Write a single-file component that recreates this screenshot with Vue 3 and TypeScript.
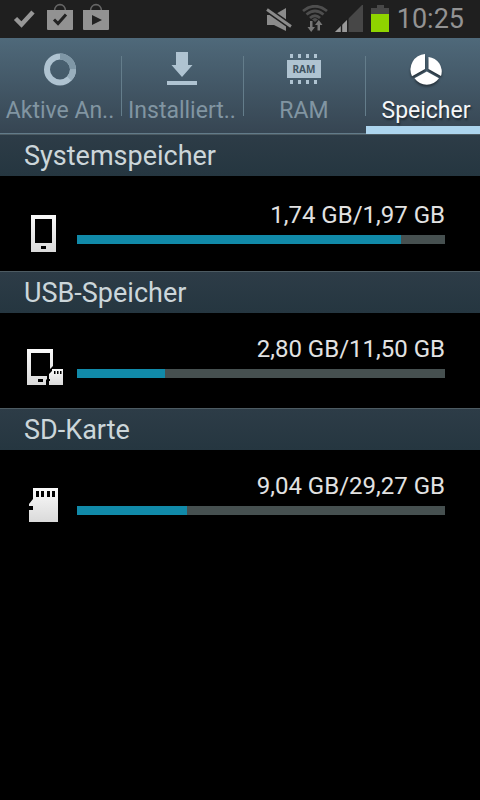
<script setup lang="ts">
import { ref } from 'vue'

interface Tab {
  id: string
  label: string
}

interface Volume {
  id: string
  title: string
  used: number
  total: number
}

const tabs: Tab[] = [
  { id: 'active', label: 'Aktive An..' },
  { id: 'installed', label: 'Installiert..' },
  { id: 'ram', label: 'RAM' },
  { id: 'storage', label: 'Speicher' },
]

const volumes: Volume[] = [
  { id: 'system', title: 'Systemspeicher', used: 1.74, total: 1.97 },
  { id: 'usb', title: 'USB-Speicher', used: 2.8, total: 11.5 },
  { id: 'sd', title: 'SD-Karte', used: 9.04, total: 29.27 },
]

const selected = ref('storage')

const gb = (n: number): string => `${n.toFixed(2).replace('.', ',')} GB`
const percent = (v: Volume): number => Math.floor((v.used / v.total) * 100)
</script>

<template>
  <div class="screen">
    <header class="status">
      <div class="notices">
        <svg class="check" width="22" height="28" viewBox="13 3 22 28" aria-hidden="true">
          <path d="M15.500 18.500L21.500 24.500L33 12" fill="none" stroke="#979797" stroke-width="4.500" />
        </svg>
        <svg width="26" height="28" viewBox="47 3 26 28" aria-hidden="true">
          <path d="M54.500 11C54.500 2.500 65.500 2.500 65.500 11" fill="none" stroke="#666" stroke-width="1.600" />
          <path d="M47 10H73V29Q73 30 72 30H48Q47 30 47 29Z" fill="#929292" />
          <path d="M54 19.500L58 23.500L66 14.500" fill="none" stroke="#222" stroke-width="3" />
        </svg>
        <svg width="26" height="28" viewBox="83 3 26 28" aria-hidden="true">
          <path d="M90.500 11C90.500 2.500 101.500 2.500 101.500 11" fill="none" stroke="#666" stroke-width="1.600" />
          <path d="M83 10H109V29Q109 30 108 30H84Q83 30 83 29Z" fill="#929292" />
          <path d="M92 15L102 20L92 25Z" fill="#222" />
        </svg>
      </div>
      <div class="system">
        <svg class="mute" width="26" height="28" viewBox="265 5 26 28" aria-hidden="true">
          <path d="M266 15H273L285 8V31L273 25H266Z" fill="#8b8b8b" />
          <path d="M263 7.400L293 28.600" stroke="#1f1f1f" stroke-width="6" />
          <path d="M266 9.500L290 26.500" stroke="#8b8b8b" stroke-width="2.800" />
        </svg>
        <svg width="26" height="28" viewBox="301 5 26 28" aria-hidden="true">
          <g fill="none" stroke="#4e4e4e" stroke-width="2.800">
            <path d="M302 11Q314 1.500 326 11" />
            <path d="M305.500 14.500Q314 7.500 322.500 14.500" />
            <path d="M309 18Q314 13.500 319 18" />
          </g>
          <path d="M311 19.500Q314 16.500 317 19.500L314 22Z" fill="#4e4e4e" />
          <path d="M309 21H311.500V27H314L310.200 32L306.500 27H309Z" fill="#777" />
          <path d="M316.500 30.500H319V25H321.500L317.800 20L314 25H316.500Z" fill="#777" />
        </svg>
        <svg width="29" height="28" viewBox="336 5 29 28" aria-hidden="true">
          <path d="M336 32L364 4V32Z" fill="#474747" />
          <path d="M336 32L342 26V32Z" fill="#999" />
          <path d="M343 25L348 20V32H343Z" fill="#999" />
          <path d="M342.500 24V32M348.800 18V32" stroke="#1d1d1d" stroke-width="1.400" />
        </svg>
        <svg width="19" height="28" viewBox="371 5 19 28" aria-hidden="true">
          <path d="M377 5H384V8H389V14H371V8H377Z" fill="#484848" />
          <path d="M371 14H389V32H371Z" fill="#8fd400" />
        </svg>
        <time class="clock">10:25</time>
      </div>
    </header>

    <nav class="tabs" role="tablist">
      <button
        v-for="tab in tabs"
        :key="tab.id"
        type="button"
        role="tab"
        class="tab"
        :class="{ selected: selected === tab.id }"
        :aria-selected="selected === tab.id"
        @click="selected = tab.id"
      >
        <svg v-if="tab.id === 'active'" class="tab-icon" viewBox="0 0 44 40" aria-hidden="true">
          <circle cx="22" cy="20.500" r="13" fill="none" stroke="#afc3d1" stroke-width="6" />
          <path d="M22 7.500A13 13 0 0 1 35 20.500" fill="none" stroke="#7f97a6" stroke-width="6" />
          <path d="M35 20.500A13 13 0 0 1 31.200 29.700" fill="none" stroke="#98aebc" stroke-width="6" />
        </svg>
        <svg v-else-if="tab.id === 'installed'" class="tab-icon" viewBox="0 0 44 40" aria-hidden="true">
          <path d="M16 3H28V16H32.500L22 28L11.500 16H16Z" fill="#afc3d1" />
          <path d="M7 32H37V36H7Z" fill="#afc3d1" />
        </svg>
        <svg v-else-if="tab.id === 'ram'" class="tab-icon" viewBox="0 0 44 40" aria-hidden="true">
          <path
            d="M8 5H11V9H8ZM16 5H19V9H16ZM24 5H27V9H24ZM32 5H35V9H32ZM8 31H11V35H8ZM16 31H19V35H16ZM24 31H27V35H24ZM32 31H35V35H32ZM5 11H39V29H5Z"
            fill="#afc3d1"
          />
          <text class="chip-text" x="22" y="23.500" text-anchor="middle">RAM</text>
        </svg>
        <svg v-else class="tab-icon" viewBox="0 0 44 40" aria-hidden="true">
          <g class="pie">
            <path d="M21 20V5A15.500 15.500 0 0 0 8 27.200Z" />
            <path d="M24.500 20V8A14.500 14.500 0 0 1 37 27Z" />
            <path d="M22.800 22.500L35 29.300A15 15 0 0 1 10.500 29.300Z" />
          </g>
        </svg>
        <span class="tab-label">{{ tab.label }}</span>
      </button>
    </nav>

    <main>
      <section v-for="volume in volumes" :key="volume.id" class="volume">
        <h2 class="title">{{ volume.title }}</h2>
        <div class="row">
          <svg class="volume-icon" viewBox="0 0 40 40" aria-hidden="true">
            <defs>
              <linearGradient :id="`shade-${volume.id}`" x1="0" y1="0" x2="0" y2="1">
                <stop offset="0" stop-color="#fafafa" />
                <stop offset="1" stop-color="#dadada" />
              </linearGradient>
            </defs>
            <g :fill="`url(#shade-${volume.id})`" fill-rule="evenodd">
              <path v-if="volume.id === 'system'" d="M7 1H32V38H7ZM11 5V29H28V5ZM17 32V35H22V32Z" />
              <template v-else-if="volume.id === 'usb'">
                <path d="M3 1H29V18L26 21V5H7V28H23V31L22 32V37H3ZM14 31V34H19V31Z" />
                <path d="M28 21H39V37H25V33H26V31H25V26L28 23ZM30 23V26H31.500V23ZM33 23V26H34.500V23ZM36 23V26H37.500V23Z" />
              </template>
              <path
                v-else
                d="M9 3H34V37H5V25H9V21H5V19L9 14ZM12 6V12H15V6ZM17 6V12H20V6ZM23 6V12H26V6ZM28 6V12H31V6Z"
              />
            </g>
          </svg>
          <div class="usage">
            <span class="amount">{{ gb(volume.used) }}/{{ gb(volume.total) }}</span>
            <div
              class="bar"
              role="progressbar"
              :aria-label="volume.title"
              :aria-valuenow="percent(volume)"
              aria-valuemin="0"
              aria-valuemax="100"
            >
              <div class="fill" :style="{ width: percent(volume) + '%' }"></div>
            </div>
          </div>
        </div>
      </section>
    </main>
  </div>
</template>

<style>
body {
  margin: 0;
  background: #000;
}
</style>

<style scoped>
.screen {
  min-height: 100vh;
  background: #000;
  color: #e2e2e2;
  font-family: Roboto, "Noto Sans", sans-serif;
}

svg {
  display: block;
  flex: none;
}

.status {
  display: flex;
  justify-content: space-between;
  box-sizing: border-box;
  height: 38px;
  padding: 3px 16px 0 13px;
  background: #1f1f1f;
}

.notices,
.system {
  display: flex;
  align-items: center;
}

.notices {
  gap: 10px;
  height: 28px;
}

.check {
  margin-right: 2px;
}

.system {
  gap: 7px;
  height: 32px;
}

.mute {
  margin-right: 3px;
}

.clock {
  color: #939393;
  font-size: 27px;
  line-height: 32px;
}

.tabs {
  display: flex;
  overflow: hidden;
  background: linear-gradient(#4f697a, #364552);
}

.tab {
  display: flex;
  flex: 1 0 122px;
  flex-direction: column;
  align-items: center;
  box-sizing: border-box;
  height: 96px;
  margin: 0;
  padding: 11px 2px 0 0;
  border: 0;
  border-bottom: 1px solid #627b89;
  background: linear-gradient(#647d8b, #647d8b) right 18px / 1px 60px no-repeat;
  color: #8195a2;
  font-family: inherit;
  cursor: pointer;
}

.tab:last-child {
  background: none;
}

.tab.selected {
  border-bottom: 8px solid #add5ee;
  color: #f4f6f8;
}

.tab-icon {
  width: 44px;
  height: 40px;
}

.tab-label {
  margin-top: 6px;
  font-size: 23px;
  line-height: 32px;
  white-space: nowrap;
}

.selected .tab-label {
  text-shadow: 1px 2px 2px #1d2831;
}

.chip-text {
  fill: #3f5361;
  font-family: "Noto Sans", sans-serif;
  font-size: 10px;
  font-weight: 700;
}

.pie {
  fill: #fff;
  filter: drop-shadow(0 2px 1px #26323b);
}

.title {
  box-sizing: border-box;
  height: 42px;
  margin: 0;
  padding: 0 24px;
  border-top: 1px solid #4d5b62;
  background: linear-gradient(#2d3c47, #253640);
  color: #ccd6da;
  font-size: 27px;
  font-weight: 400;
  line-height: 42px;
}

.row {
  display: flex;
  gap: 13px;
  box-sizing: border-box;
  height: 95px;
  padding: 20px 35px 0 24px;
}

.volume:first-child .row {
  padding-top: 23px;
}

.volume-icon {
  width: 40px;
  height: 40px;
  margin-top: 15px;
}

.usage {
  display: flex;
  flex: 1;
  flex-direction: column;
  min-width: 0;
}

.amount {
  font-size: 24px;
  line-height: 32px;
  text-align: right;
}

.bar {
  height: 9px;
  margin-top: 4px;
  background: #465050;
}

.fill {
  height: 100%;
  background: #118aa9;
}
</style>
